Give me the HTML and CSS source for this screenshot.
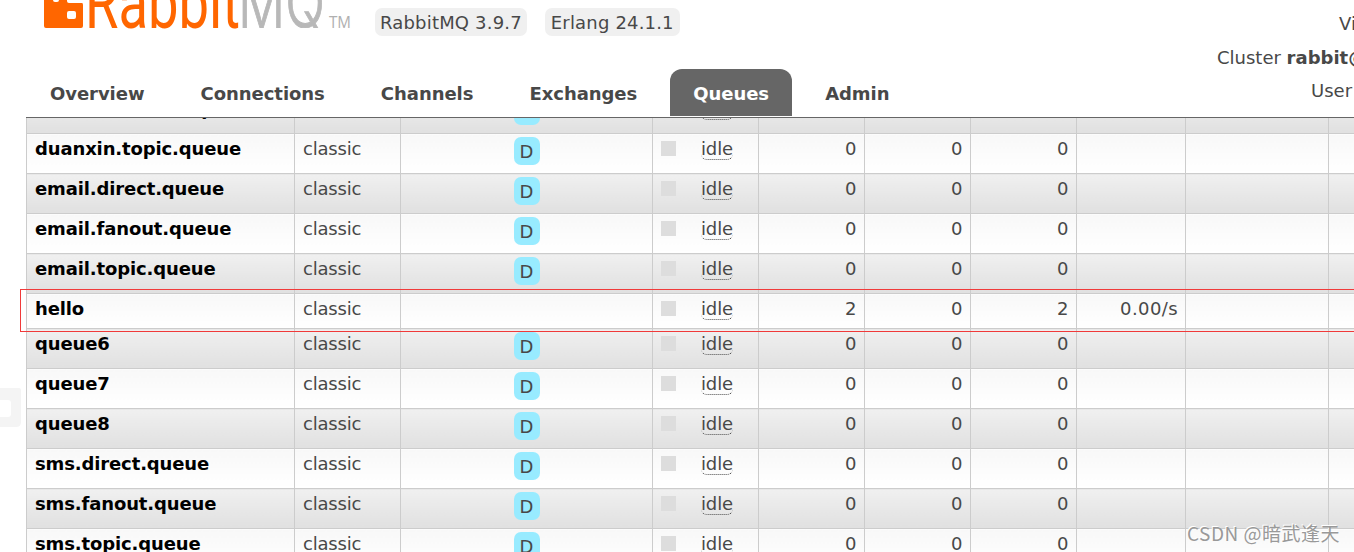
FILE: index.html
```
<!DOCTYPE html>
<html lang="en">
<head>
<meta charset="UTF-8">
<title>RabbitMQ Management</title>
<link rel="stylesheet" href="styles.css">
</head>
<body>
<div class="screen">
  <div class="header">
    <div class="top">
      <svg class="logo" width="320" height="36" viewBox="36 0 320 36">
        <clipPath id="baseline"><rect x="236" y="0" width="90" height="28"/></clipPath>
        <path fill="#f60" fill-rule="evenodd" d="M44 0H53Q53 2 55 2H57Q59 2 59 0H67V1Q67 3 69 3H82Q83 3 83 5V26Q83 28 81 28H46Q44 28 44 26ZM69 11Q67 11 67 13V17Q67 19 69 19H74Q76 19 76 17V13Q76 11 74 11Z"/>
        <text class="logo-rabbit" x="85" y="28" textLength="155" lengthAdjust="spacingAndGlyphs">Rabbit</text>
        <g clip-path="url(#baseline)">
          <text class="logo-mq" x="238" y="28" textLength="87" lengthAdjust="spacingAndGlyphs">MQ</text>
        </g>
        <text class="logo-tm" x="329" y="28" textLength="22" lengthAdjust="spacingAndGlyphs">TM</text>
      </svg>
      <span class="version">RabbitMQ 3.9.7</span>
      <span class="version">Erlang 24.1.1</span>
    </div>
    <ul class="login">
      <li class="vhost">Virtual host</li>
      <li class="cluster">Cluster <b>rabbit@localhost</b></li>
      <li class="user">User <b>admin</b></li>
    </ul>
    <ul class="tabs">
      <li>Overview</li>
      <li>Connections</li>
      <li>Channels</li>
      <li>Exchanges</li>
      <li class="selected">Queues</li>
      <li>Admin</li>
    </ul>
  </div>
  <div class="content">
    <table class="list">
      <colgroup>
        <col class="c-name"><col class="c-type"><col class="c-features"><col class="c-state">
        <col class="c-num"><col class="c-num"><col class="c-num"><col class="c-rate"><col class="c-rate2"><col class="c-rate2">
      </colgroup>
      <tbody id="queues"></tbody>
    </table>
  </div>
  <div class="highlight"></div>
  <svg class="ghost" width="21" height="40" viewBox="0 0 21 40"><path fill="#f4f4f4" fill-rule="evenodd" d="M0 0H19Q21 0 21 2V34Q21 39 16 39H0V29H8Q11 29 11 26V15Q11 12 8 12H0Z"/></svg>
  <div class="watermark">CSDN @暗武逢天</div>
</div>
<script>
  const queues = [
    ['duanxin.fanout.queue', 0, 0, 0],
    ['duanxin.topic.queue', 0, 0, 0],
    ['email.direct.queue', 0, 0, 0],
    ['email.fanout.queue', 0, 0, 0],
    ['email.topic.queue', 0, 0, 0],
    ['hello', 2, 0, 2, '0.00/s'],
    ['queue6', 0, 0, 0],
    ['queue7', 0, 0, 0],
    ['queue8', 0, 0, 0],
    ['sms.direct.queue', 0, 0, 0],
    ['sms.fanout.queue', 0, 0, 0],
    ['sms.topic.queue', 0, 0, 0]
  ];

  document.getElementById('queues').innerHTML = queues.map(([name, ready, unacked, total, rate], i) => {
    const durable = name !== 'hello';
    return `<tr class="${i % 2 ? 'alt2' : 'alt1'}${durable ? '' : ' short'}">
      <td class="name">${name}</td>
      <td class="type">classic</td>
      <td class="c">${durable ? '<abbr class="durable">D</abbr>' : ''}</td>
      <td><div class="state"><i class="box"></i><abbr class="idle">idle</abbr></div></td>
      <td class="r">${ready}</td><td class="r">${unacked}</td><td class="r">${total}</td>
      <td class="r rate">${rate || ''}</td><td></td><td></td>
    </tr>`;
  }).join('');
</script>
</body>
</html>
```
FILE: styles.css
```
body {
  margin: 0;
  background: #fff;
  color: #484848;
  font: 18px/22px "DejaVu Sans", Verdana, sans-serif;
}
ul {
  list-style: none;
  margin: 0;
  padding: 0;
}
.screen {
  position: relative;
  width: 1354px;
  height: 552px;
  overflow: hidden;
}
.header {
  display: grid;
  grid-template-columns: 1194px 160px;
  grid-template-rows: 69px 48px;
  height: 117px;
  border-bottom: 1px solid #666;
  margin-left: 26px;
}
.top {
  display: flex;
  align-items: flex-start;
  padding-left: 10px;
}
.logo {
  margin-right: 19px;
  flex: none;
}
.logo-rabbit {
  font-family: Roboto, sans-serif;
  font-size: 72px;
  font-weight: 400;
  fill: #f60;
}
.logo-mq {
  font-family: Inter, sans-serif;
  font-size: 70px;
  font-weight: 300;
  fill: #b8b8b8;
  stroke: #b8b8b8;
  stroke-width: 1px;
}
.logo-tm {
  font-family: "Open Sans", sans-serif;
  font-size: 16px;
  fill: #b0b0b0;
}
.version {
  margin: 8px 18px 0 0;
  padding: 4px 5px 2px;
  background: #f0f0f0;
  border-radius: 7px;
  white-space: nowrap;
  letter-spacing: 0.18px;
}
.version + .version {
  padding: 4px 6px 2px;
}
.login {
  grid-column: 2;
  grid-row: 1 / 3;
  padding-top: 13px;
  white-space: nowrap;
}
.login li {
  height: 34px;
}
.login .vhost {
  padding-left: 119px;
}
.login .cluster {
  margin-left: -3px;
}
.login .user {
  margin-top: -1px;
  padding-left: 91px;
}
.tabs {
  grid-column: 1;
  grid-row: 2;
  display: flex;
  font-weight: bold;
  padding-left: 1px;
  letter-spacing: -0.05px;
}
.tabs li {
  height: 33px;
  padding: 14px 23px 0;
  margin-right: 10.1px;
}
.tabs .selected {
  background: #666;
  color: #fff;
  border-radius: 12px 12px 0 0;
}
.content {
  height: 434px;
  margin-left: 26px;
  overflow: hidden;
}
.list {
  table-layout: fixed;
  width: 1446px;
  margin-top: -25px;
  border-collapse: collapse;
}
.c-name { width: 268px; }
.c-type { width: 106px; }
.c-features { width: 252px; }
.c-state { width: 106px; }
.c-num { width: 106px; }
.c-rate { width: 109px; }
.c-rate2 { width: 143px; }
.list tr {
  height: 40px;
}
.list tr.short {
  height: 35px;
}
.list td {
  border: 1px solid #ccc;
  padding: 4px 8px 0;
  vertical-align: top;
  line-height: 22px;
}
.alt1 td {
  background: linear-gradient(#f0f0f0, #e0e0e0);
}
.alt2 td {
  background: linear-gradient(#f8f8f8, #fff);
}
.list .name {
  color: #000;
  font-weight: bold;
  letter-spacing: -0.13px;
}
.list .type {
  letter-spacing: -0.2px;
}
.list .c {
  text-align: center;
}
.list .r {
  text-align: right;
  padding-right: 7.5px;
}
.list .rate {
  padding-right: 7px;
  letter-spacing: 0.4px;
}
.durable {
  display: inline-block;
  width: 26px;
  height: 24px;
  padding-top: 4px;
  margin-top: -1px;
  background: #98ebff;
  border-radius: 7px;
}
.state {
  display: flex;
}
.box {
  width: 15px;
  height: 15px;
  margin: 3px 25px 0 0;
  background: #ddd;
}
.idle {
  height: 21px;
  border-bottom: 1px dotted #484848;
  border-radius: 6px;
  letter-spacing: -0.15px;
}
.highlight {
  position: absolute;
  left: 20px;
  top: 289px;
  width: 1340px;
  height: 41px;
  border: 1px solid #f03a3a;
}
.ghost {
  position: absolute;
  left: 0;
  top: 388px;
}
.watermark {
  position: absolute;
  left: 1187px;
  top: 521px;
  font: 19px/24px "Noto Sans CJK SC", sans-serif;
  letter-spacing: 0.5px;
  color: #999;
  text-shadow: -1px -1px 0 #fff;
  white-space: nowrap;
}
```
